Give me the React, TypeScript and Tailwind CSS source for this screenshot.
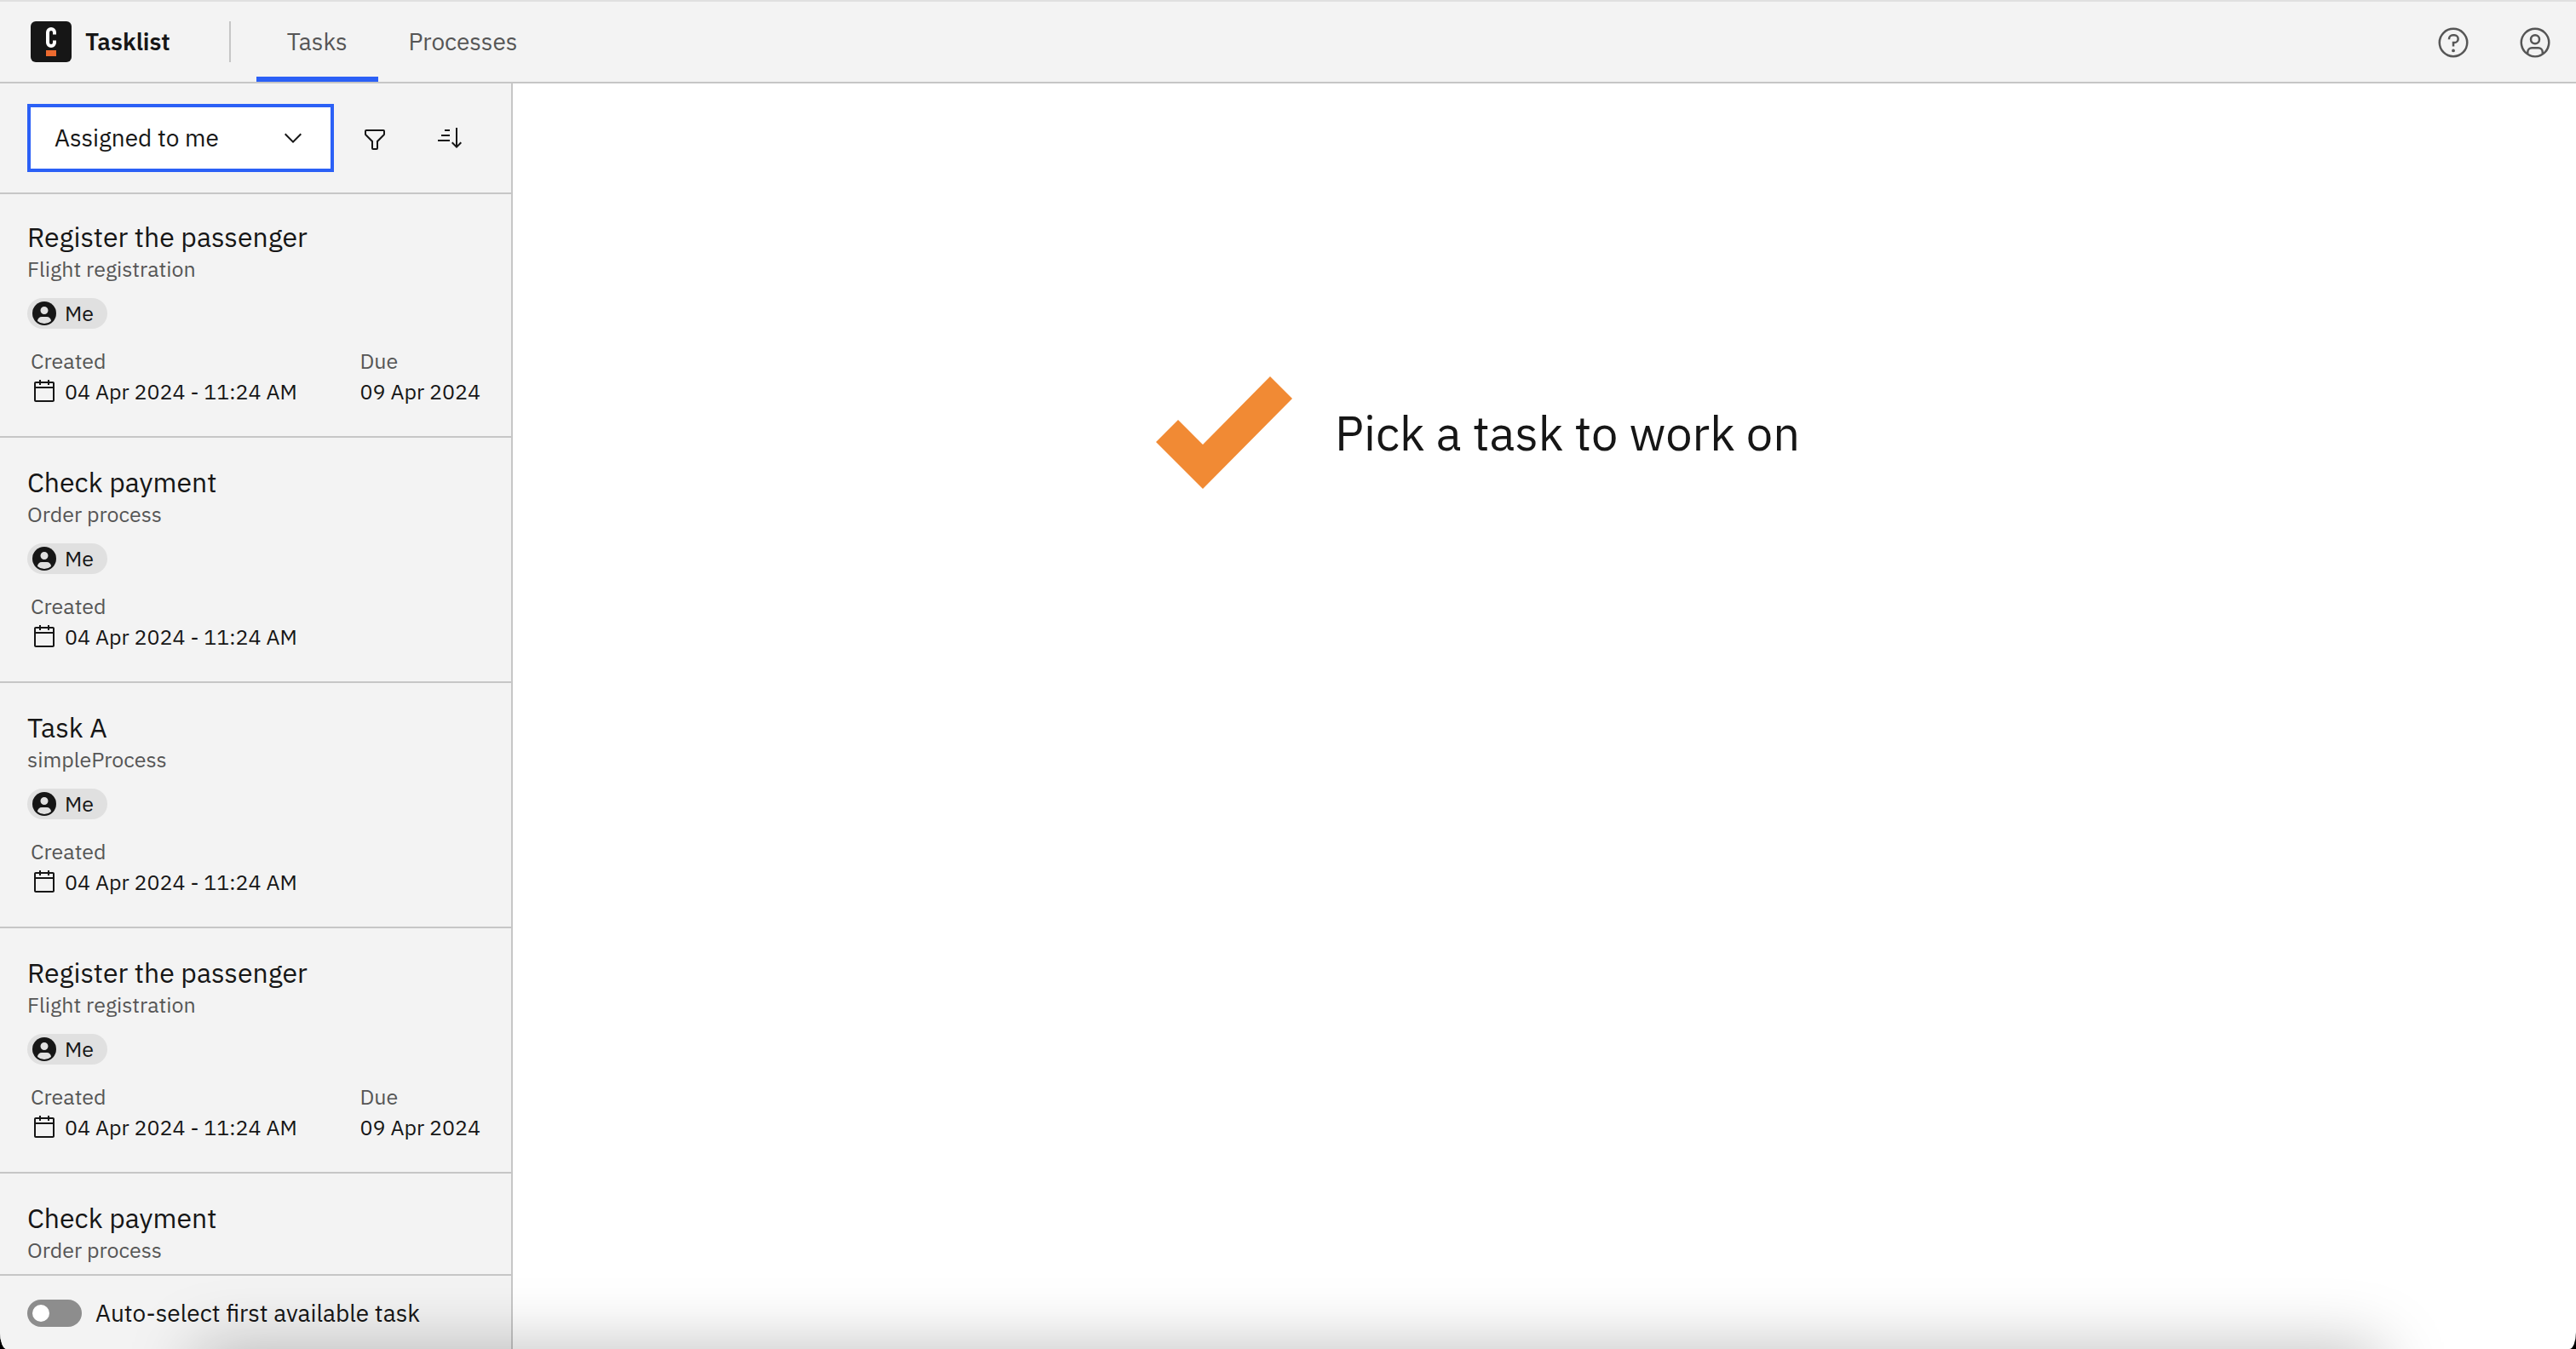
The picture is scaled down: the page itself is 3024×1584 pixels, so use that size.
import React from "react";

type Task = { name: string; process: string; created: string; due?: string };

const created = "04 Apr 2024 - 11:24 AM";
const tasks: Task[] = [
  { name: "Register the passenger", process: "Flight registration", created, due: "09 Apr 2024" },
  { name: "Check payment", process: "Order process", created },
  { name: "Task A", process: "simpleProcess", created },
  { name: "Register the passenger", process: "Flight registration", created, due: "09 Apr 2024" },
  { name: "Check payment", process: "Order process", created },
];

function Icon({ className, children }: { className: string; children: React.ReactNode }) {
  return (
    <svg viewBox="0 0 32 32" fill="currentColor" aria-hidden="true" className={className}>
      {children}
    </svg>
  );
}

function Logo() {
  return (
    <svg viewBox="0 0 48 48" className="size-12 shrink-0" aria-hidden="true">
      <rect width="48" height="48" rx="6" fill="#161616" />
      <path d="M28 15.5V13a4 4 0 0 0-8 0v12a4 4 0 0 0 8 0v-2.5" fill="none" stroke="#fff" strokeWidth="4" />
      <rect x="18" y="34" width="12" height="7" fill="#ec6a2f" />
    </svg>
  );
}

function HelpIcon() {
  return (
    <Icon className="size-10">
      <path d="M16,2A14,14,0,1,0,30,16,14,14,0,0,0,16,2Zm0,26A12,12,0,1,1,28,16,12,12,0,0,1,16,28Z" />
      <circle cx="16" cy="23.5" r="1.5" />
      <path d="M17,8H15.5A4.49,4.49,0,0,0,11,12.5V13h2v-.5A2.5,2.5,0,0,1,15.5,10H17a2.5,2.5,0,0,1,0,5H15v4.5h2V17a4.5,4.5,0,0,0,0-9Z" />
    </Icon>
  );
}

function AccountIcon() {
  return (
    <Icon className="size-10">
      <path d="M16,8a5,5,0,1,0,5,5A5,5,0,0,0,16,8Zm0,8a3,3,0,1,1,3-3A3.0034,3.0034,0,0,1,16,16Z" />
      <path d="M16,2A14,14,0,1,0,30,16,14.0158,14.0158,0,0,0,16,2ZM10,26.3765V25a3.0033,3.0033,0,0,1,3-3h6a3.0033,3.0033,0,0,1,3,3v1.3765a11.8989,11.8989,0,0,1-12,0Zm13.9925-1.4507A5.0016,5.0016,0,0,0,19,20H13a5.0016,5.0016,0,0,0-4.9925,4.9258,12,12,0,1,1,15.985,0Z" />
    </Icon>
  );
}

function AvatarIcon() {
  return (
    <Icon className="size-8 shrink-0">
      <circle cx="16" cy="16" r="14" />
      <path
        fill="#e0e0e0"
        d="M8.0071,24.93A4.9958,4.9958,0,0,1,13,20h6a4.9959,4.9959,0,0,1,4.9929,4.93,11.94,11.94,0,0,1-15.9858,0ZM20.5,12.5A4.5,4.5,0,1,1,16,8,4.5,4.5,0,0,1,20.5,12.5Z"
      />
    </Icon>
  );
}

function CalendarIcon() {
  return (
    <Icon className="size-8 shrink-0">
      <path d="M26,4h-4V2h-2v2h-8V2h-2v2H6C4.9,4,4,4.9,4,6v20c0,1.1,0.9,2,2,2h20c1.1,0,2-0.9,2-2V6C28,4.9,27.1,4,26,4z M26,26H6V12h20V26z M26,10H6V6h4v2h2V6h8v2h2V6h4V10z" />
    </Icon>
  );
}

function TaskCard({ task }: { task: Task }) {
  return (
    <li className="h-72 shrink-0 border-b-2 border-[#c6c6c6] first:-mt-0.5">
      <a href="#task" className="block px-8 pt-8">
        <h2 className="text-[32px] leading-10">{task.name}</h2>
        <p className="text-[25px] leading-9 text-[#565656]">{task.process}</p>
        <span className="mt-4 flex h-9 w-fit items-center gap-2 rounded-full bg-[#e0e0e0] pr-4 pl-1 text-[25px] leading-9">
          <AvatarIcon />
          Me
        </span>
        <div className="mt-5 flex justify-between px-1 text-[25px] leading-9">
          <div>
            <div className="text-[#565656]">Created</div>
            <div className="flex items-center gap-2">
              <CalendarIcon />
              {task.created}
            </div>
          </div>
          {task.due && (
            <div>
              <div className="text-[#565656]">Due</div>
              <div>{task.due}</div>
            </div>
          )}
        </div>
      </a>
    </li>
  );
}

export default function App() {
  return (
    <div className="h-screen bg-black">
      <div className="relative flex h-full flex-col overflow-hidden bg-white font-['IBM_Plex_Sans','Roboto','Liberation_Sans',sans-serif] text-[28px] leading-9 text-[#161616] [border-bottom-left-radius:8px_20px] [border-bottom-right-radius:8px_20px]">
        <header className="flex h-[98px] shrink-0 items-stretch border-t-2 border-b-2 border-t-[#e0e0e0] border-b-[#c6c6c6] bg-[#f3f3f3]">
          <a href="#home" className="flex items-center gap-4 pl-9 font-semibold">
            <Logo />
            Tasklist
          </a>
          <div className="mr-[30px] ml-[69px] h-12 w-0.5 self-center bg-[#c6c6c6]" />
          <nav className="flex text-[#565656]">
            <a href="#tasks" aria-current="page" className="flex items-center border-b-[6px] border-[#2b60f6] px-9 pt-1.5">
              Tasks
            </a>
            <a href="#processes" className="flex items-center px-9">
              Processes
            </a>
          </nav>
          <div className="ml-auto flex pt-0.5 text-[#565656]">
            <button type="button" aria-label="Help" className="flex w-24 items-center justify-center">
              <HelpIcon />
            </button>
            <button type="button" aria-label="Account" className="flex w-24 items-center justify-center">
              <AccountIcon />
            </button>
          </div>
        </header>

        <div className="flex min-h-0 flex-1">
          <aside className="flex w-[602px] shrink-0 flex-col border-r-2 border-[#c6c6c6] bg-[#f3f3f3]">
            <div className="flex h-[130px] shrink-0 items-center border-b-2 border-[#c6c6c6] pl-8">
              <div className="relative">
                <select
                  aria-label="Task filter"
                  className="h-20 w-[360px] appearance-none border-4 border-[#2b60f6] bg-white pr-16 pl-7 outline-none"
                >
                  <option>Assigned to me</option>
                </select>
                <Icon className="pointer-events-none absolute top-6 right-8 size-8">
                  <path d="M16 22 6 12l1.4-1.4 8.6 8.6 8.6-8.6L26 12z" />
                </Icon>
              </div>
              <button type="button" aria-label="Filter tasks" className="ml-1 flex h-20 w-[88px] items-center justify-center pt-1">
                <Icon className="size-8">
                  <path d="M18,28H14a2,2,0,0,1-2-2V18.41L4.59,11A2,2,0,0,1,4,9.59V6A2,2,0,0,1,6,4H26a2,2,0,0,1,2,2V9.59A2,2,0,0,1,27.41,11L20,18.41V26A2,2,0,0,1,18,28ZM6,6V9.59l8,8V26h4V17.59l8-8V6Z" />
                </Icon>
              </button>
              <button type="button" aria-label="Sort tasks" className="flex h-20 w-[88px] items-center justify-center">
                <Icon className="size-8">
                  <path d="M10 6h6v2h-6zM6 12h10v2H6zM2 18h14v2H2zM18 22l1.41-1.41L23 24.17V4h2v20.17l3.59-3.58L30 22l-6 6z" />
                </Icon>
              </button>
            </div>

            <ul className="flex min-h-0 flex-1 flex-col overflow-hidden">
              {tasks.map((task, i) => (
                <TaskCard key={i} task={task} />
              ))}
            </ul>

            <label className="flex h-22 shrink-0 items-center gap-4 border-t-2 border-[#c6c6c6] pt-0.5 pl-8">
              <input
                type="checkbox"
                role="switch"
                className="flex h-8 w-16 appearance-none items-center rounded-full bg-[#8d8d8d] px-1.5 before:size-5 before:rounded-full before:bg-white before:content-[''] checked:justify-end"
              />
              Auto-select first available task
            </label>
          </aside>

          <main className="flex flex-1 items-start justify-center pt-[344px] pr-39">
            <div className="flex items-center gap-[50px]">
              <svg viewBox="0 0 160 132" className="h-[132px] w-40" aria-hidden="true">
                <path d="M0 77 26 51 55 80 134 0 160 26 55 132z" fill="#f18a34" />
              </svg>
              <h1 className="text-[56px] leading-[72px]">Pick a task to work on</h1>
            </div>
          </main>
        </div>

        <div className="pointer-events-none absolute inset-x-[230px] top-full h-20 shadow-[0_0_80px_rgba(0,0,0,0.27)]" />
      </div>
    </div>
  );
}
